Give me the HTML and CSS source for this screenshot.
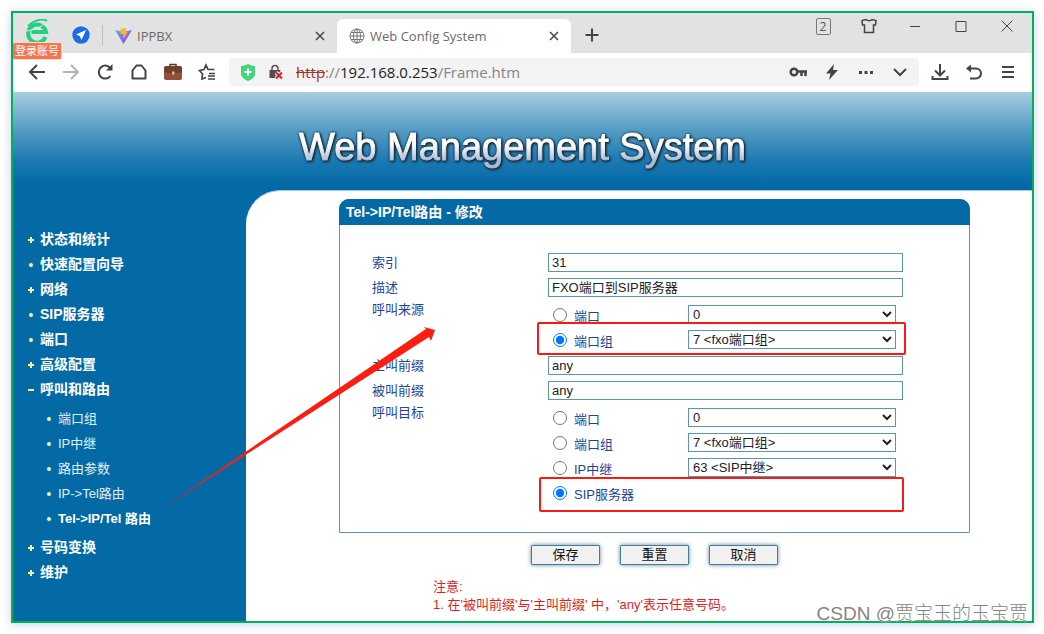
FILE: index.html
```html
<!DOCTYPE html>
<html lang="zh-CN">
<head>
<meta charset="utf-8">
<meta name="viewport" content="width=device-width, initial-scale=1">
<title>Web Config System</title>
<link rel="stylesheet" href="styles.css">
</head>
<body>
<div class="window">
  <header class="tabstrip">
    <div class="brand">
      <svg width="24" height="24" viewBox="0 0 24 24" fill="none" aria-hidden="true">
        <path d="M20.500 18A9 9 0 1 1 21 13H6.500" stroke="#22cf83" stroke-width="4"/>
        <path d="M3 7C9 1 18-1 22 2" stroke="#22cf83" stroke-width="2"/>
        <path d="M1 12C9 11 17 8 21 3" stroke="#e2e2e2" stroke-width="1"/>
      </svg>
      <span class="login">登录账号</span>
    </div>
    <svg class="plane" width="18" height="18" viewBox="0 0 18 18" aria-hidden="true"><circle cx="9" cy="9" r="8.700" fill="#1a6fe0"/><path d="M14 4 4 8.500l3.700 1.400L9.500 14z" fill="#fff"/></svg>
    <span class="divider"></span>
    <div class="tab">
      <svg width="17" height="16" viewBox="0 0 17 16" aria-hidden="true">
        <defs><linearGradient id="vite" x1="0" y1="0" x2="1" y2="1"><stop offset="0" stop-color="#45b8f5"/><stop offset="1" stop-color="#b52de0"/></linearGradient></defs>
        <path d="M0 2 8.500 16 17 2 8.500 4z" fill="url(#vite)"/><path d="M5.500 1 11.500 0l-1 4h2L8.500 11 8 6H5.500z" fill="#f8b91f"/>
      </svg>
      <span class="tab-name">IPPBX</span>
      <button class="close" aria-label="关闭 IPPBX"><svg width="10" height="10" viewBox="0 0 10 10"><path d="M1 1l8 8M9 1 1 9"/></svg></button>
    </div>
    <div class="tab active">
      <svg width="16" height="16" viewBox="0 0 16 16" fill="none" stroke="#777" aria-hidden="true"><circle cx="8" cy="8" r="7"/><ellipse cx="8" cy="8" rx="3.500" ry="7"/><path d="M8 1v14M1 8h14M2 4.500h12M2 11.500h12"/></svg>
      <span class="tab-name">Web Config System</span>
      <button class="close" aria-label="关闭 Web Config System"><svg width="10" height="10" viewBox="0 0 10 10"><path d="M1 1l8 8M9 1 1 9"/></svg></button>
    </div>
    <button class="newtab" aria-label="新标签页"><svg width="14" height="14" viewBox="0 0 14 14"><path d="M7 .5v13M.5 7h13"/></svg></button>
    <div class="controls">
      <button aria-label="窗口数"><span class="count">2</span></button>
      <button aria-label="皮肤"><svg width="16" height="16" viewBox="0 0 16 16"><path d="M5 1.500C6.500 3 9.500 3 11 1.500l4 1-.5 4.500h-2v7.500h-9V7h-2L1 2.500z" stroke-width="1.500"/></svg></button>
      <button aria-label="最小化"><svg width="12" height="12" viewBox="0 0 12 12"><path d="M1 6.500h10"/></svg></button>
      <button aria-label="最大化"><svg width="12" height="12" viewBox="0 0 12 12"><path d="M1 1.500h10v10H1z"/></svg></button>
      <button aria-label="关闭"><svg width="12" height="12" viewBox="0 0 12 12"><path d="m.5.5 11 11M11.500.5l-11 11"/></svg></button>
    </div>
  </header>

  <nav class="toolbar" aria-label="浏览器工具栏">
    <button aria-label="后退"><svg width="18" height="18" viewBox="0 0 18 18"><path d="M17 9H2.500M9 2 2 9l7 7"/></svg></button>
    <button class="dim" aria-label="前进"><svg width="18" height="18" viewBox="0 0 18 18"><path d="M1 9h14.500M9 2l7 7-7 7"/></svg></button>
    <button aria-label="刷新"><svg width="18" height="18" viewBox="0 0 18 18"><path d="M14.500 13A6.500 6.500 0 1 1 15 6"/><path d="M16.500 1v6.500H10z" fill="#444" stroke="none"/></svg></button>
    <button aria-label="主页"><svg width="18" height="18" viewBox="0 0 18 18"><path d="M2.500 15.500V7.500L6.500 2.500h5l4 5v8z" stroke-linejoin="round"/></svg></button>
    <button aria-label="工具箱"><svg width="20" height="18" viewBox="0 0 20 18"><path d="M7 4V1.500h6V4" stroke="#5d3323" stroke-width="1.500"/><rect x="1" y="3.500" width="18" height="13.500" rx="2" fill="#8f5138" stroke="none"/><path d="M1 5q0-2 2-2h14q2 0 2 2v4l-9 2-9-2z" fill="#70402d" stroke="none"/><path d="M9 8.500h2.500v3H9z" fill="#e7b48d" stroke="none"/></svg></button>
    <button aria-label="收藏"><svg width="18" height="18" viewBox="0 0 18 18"><path d="M8 14.500 4 16l.5-5L1.500 7.500l4.500-1L8 2l2 4.500h6.500M11 10.500h6M10 13h7M10 16h7" stroke-width="1.700"/></svg></button>
    <div class="address">
      <svg width="16" height="17" viewBox="0 0 16 17" aria-hidden="true"><path d="M1 2q4 0 7-2 3 2 7 2v8q0 4-7 7-7-3-7-7z" fill="#43d579"/><path d="M8 4.500v7M4.500 8h7" stroke="#fff" stroke-width="2"/></svg>
      <svg width="16" height="16" viewBox="0 0 16 16" fill="none" aria-hidden="true"><path d="M4 7V4.500a3 3 0 0 1 6 0V7" stroke="#555" stroke-width="1.500"/><path d="M1.500 6h11v8h-11z" fill="#505050"/><path d="m8 8.500 6 6M14 8.500l-6 6" stroke="#f3f3f3" stroke-width="4"/><path d="m8 8.500 6 6M14 8.500l-6 6" stroke="#d0222c" stroke-width="2"/></svg>
      <span class="url"><s>http</s>://<b>192.168.0.253</b>/Frame.htm</span>
      <span class="address-tools">
        <button aria-label="密码"><svg width="18" height="12" viewBox="0 0 18 12"><circle cx="5" cy="6" r="3.300" stroke-width="2.500"/><path d="M8 5.500h10M12.500 5.500V10M16.500 5.500V10" stroke-width="2.500"/></svg></button>
        <button aria-label="加速"><svg width="14" height="16" viewBox="0 0 14 16"><path d="M9 0 1 9.500h4.500L4 16l9-10H8z" fill="#444" stroke="none"/></svg></button>
        <button aria-label="更多"><svg width="16" height="4" viewBox="0 0 16 4"><path d="M1 1h3v3H1zM6.500 1h3v3h-3zM12 1h3v3h-3z" fill="#444" stroke="none"/></svg></button>
        <button aria-label="展开"><svg width="14" height="9" viewBox="0 0 14 9"><path d="m1 1 6 6 6-6"/></svg></button>
      </span>
    </div>
    <button aria-label="下载"><svg width="18" height="18" viewBox="0 0 18 18"><path d="M9 1v11M4 7.500l5 5 5-5M1.500 13v3h15v-3"/></svg></button>
    <button aria-label="恢复"><svg width="18" height="18" viewBox="0 0 18 18"><path d="M3 5.500h8a5 5 0 0 1 0 10H5"/><path d="M1 5.500 6 1.500v8z" fill="#444" stroke="none"/></svg></button>
    <button aria-label="菜单"><svg width="14" height="14" viewBox="0 0 14 14"><path d="M1 2h12M1 7h12M1 12h12"/></svg></button>
  </nav>

  <div class="banner"><h1>Web Management System</h1></div>

  <div class="frame">
    <nav class="sidebar" aria-label="主菜单">
      <ul class="menu">
        <li><a class="plus" href="#">状态和统计</a></li>
        <li><a class="dot" href="#">快速配置向导</a></li>
        <li><a class="plus" href="#">网络</a></li>
        <li><a class="dot" href="#">SIP服务器</a></li>
        <li><a class="dot" href="#">端口</a></li>
        <li><a class="plus" href="#">高级配置</a></li>
        <li><a class="minus" href="#">呼叫和路由</a>
          <ul class="submenu">
            <li><a class="dot" href="#">端口组</a></li>
            <li><a class="dot" href="#">IP中继</a></li>
            <li><a class="dot" href="#">路由参数</a></li>
            <li><a class="dot" href="#">IP-&gt;Tel路由</a></li>
            <li><a class="dot current" href="#">Tel-&gt;IP/Tel 路由</a></li>
          </ul>
        </li>
        <li><a class="plus" href="#">号码变换</a></li>
        <li><a class="plus" href="#">维护</a></li>
      </ul>
    </nav>

    <main class="content">
      <form>
        <section class="panel">
          <h2>Tel-&gt;IP/Tel路由 - 修改</h2>
          <div class="fields">
            <div class="row"><label for="index">索引</label><input id="index" type="text" value="31"></div>
            <div class="row"><label for="desc">描述</label><input id="desc" type="text" value="FXO端口到SIP服务器"></div>
            <div class="row group" role="radiogroup" aria-labelledby="source">
              <span class="group-name" id="source">呼叫来源</span>
              <div class="options">
                <div class="option"><input type="radio" name="source" id="s1"><label for="s1">端口</label><select aria-label="来源端口"><option>0</option></select></div>
                <div class="option marked"><input type="radio" name="source" id="s2" checked><label for="s2">端口组</label><select aria-label="来源端口组"><option>7 &lt;fxo端口组&gt;</option></select></div>
              </div>
            </div>
            <div class="row"><label for="caller">主叫前缀</label><input id="caller" type="text" value="any"></div>
            <div class="row"><label for="callee">被叫前缀</label><input id="callee" type="text" value="any"></div>
            <div class="row group" role="radiogroup" aria-labelledby="target">
              <span class="group-name" id="target">呼叫目标</span>
              <div class="options">
                <div class="option"><input type="radio" name="target" id="t1"><label for="t1">端口</label><select aria-label="目标端口"><option>0</option></select></div>
                <div class="option"><input type="radio" name="target" id="t2"><label for="t2">端口组</label><select aria-label="目标端口组"><option>7 &lt;fxo端口组&gt;</option></select></div>
                <div class="option"><input type="radio" name="target" id="t3"><label for="t3">IP中继</label><select aria-label="目标IP中继"><option>63 &lt;SIP中继&gt;</option></select></div>
                <div class="option marked last"><input type="radio" name="target" id="t4" checked><label for="t4">SIP服务器</label></div>
              </div>
            </div>
          </div>
        </section>
        <div class="actions">
          <button type="button">保存</button>
          <button type="button">重置</button>
          <button type="button">取消</button>
        </div>
      </form>
      <div class="note">
        <p>注意:</p>
        <p>1. 在'被叫前缀'与'主叫前缀' 中，'any'表示任意号码。</p>
      </div>
    </main>
  </div>

  <svg class="arrow" width="280" height="190" viewBox="0 0 280 190" aria-hidden="true"><path d="M0 185 266 4l-2-2 11 3-4 11-2-4z" fill="#fc1c10"/></svg>
  <span class="watermark">CSDN @贾宝玉的玉宝贾</span>
</div>
</body>
</html>
```
FILE: styles.css
```css
*, *::before, *::after { box-sizing: border-box; }

body {
  margin: 0;
  padding: 11px 10px;
  background: #fff;
  font: 13px/19px "Liberation Sans", "Noto Sans CJK SC", sans-serif;
}

h1, h2, p, ul { margin: 0; padding: 0; }
ul { list-style: none; }
svg { display: block; flex: none; }
button, input, select { font: inherit; }

.window {
  position: relative;
  display: flex;
  flex-direction: column;
  min-height: calc(100vh - 22px);
  margin-left: 1px;
  border: 2px solid #00b15a;
  box-shadow: 0 1px 9px rgba(70, 100, 190, .3);
  background: #fff;
}

/* Browser tabs */
.tabstrip {
  display: flex;
  align-items: center;
  height: 40px;
  padding-left: 12px;
  background: #e2e2e2;
  font-family: "Open Sans", "Noto Sans CJK SC", sans-serif;
  color: #6a6a6a;
}
.tabstrip button, .toolbar button {
  display: flex;
  align-items: center;
  justify-content: center;
  padding: 0;
  border: 0;
  background: none;
}
.tabstrip button svg, .toolbar button svg { fill: none; stroke: #444; }
.brand { position: relative; width: 24px; height: 28px; }
.login {
  position: absolute;
  top: 23px;
  left: -12px;
  z-index: 2;
  padding: 0 2px;
  border: 1px solid #f9ddd0;
  border-left: 0;
  border-radius: 2px;
  background: #f4764e;
  color: #fff;
  font-size: 11px;
  line-height: 16px;
  white-space: nowrap;
}
.plane { margin-left: 23px; margin-top: 4px; }
.divider { width: 1px; height: 20px; margin-left: 12px; margin-top: 4px; background: #bdbdbd; }
.tab {
  display: flex;
  align-items: center;
  align-self: flex-end;
  width: 234px;
  height: 34px;
  padding: 0 12px;
  gap: 5px;
}
.active { border-radius: 6px 6px 0 0; background: #fff; }
.tab-name { flex: 1; white-space: nowrap; }
.close { width: 10px; height: 20px; }
.close svg { stroke-width: 1.5; }
.newtab { width: 42px; height: 34px; margin-top: 4px; }
.newtab svg { stroke-width: 2; }
.controls {
  display: flex;
  align-self: flex-start;
  margin-left: auto;
  padding-right: 2px;
}
.controls button { width: 46px; height: 26px; }
.count {
  width: 15px;
  border: 1px solid #777;
  border-radius: 2px;
  color: #555;
  font-size: 12px;
  line-height: 15px;
}

/* Browser toolbar */
.toolbar {
  display: flex;
  align-items: center;
  height: 39px;
  padding: 0 7px 1px;
}
.toolbar button { flex: none; width: 34px; height: 28px; }
.toolbar button svg { stroke-width: 2; }
.toolbar .dim { opacity: .4; }
.address {
  display: flex;
  flex: 1;
  align-items: center;
  gap: 12px;
  height: 28px;
  margin: 0 4px 0 5px;
  padding-left: 11px;
  border-radius: 4px;
  background: #f3f3f3;
}
.url {
  color: #858585;
  font: 15px/20px "Open Sans", sans-serif;
  white-space: nowrap;
}
.url b { color: #222; font-weight: 400; }
.url s { color: #9d342e; }
.address-tools { display: flex; margin-left: auto; padding-right: 2px; }

/* Page banner */
.banner {
  display: flex;
  align-items: center;
  justify-content: center;
  height: 98px;
  padding-top: 12px;
  background: linear-gradient(#a8cde0, #5a9fc6 36%, #1c79b2 70%, #036aa6 94%);
}
.banner h1 {
  padding: 0 2px;
  background: linear-gradient(#fff 45%, #a9bcd6 80%);
  background-clip: text;
  -webkit-background-clip: text;
  -webkit-text-stroke: 1px transparent;
  color: transparent;
  filter: drop-shadow(0 0 1px #0c2233) drop-shadow(1px 1px 1px #12242e);
  font-size: 38px;
  font-weight: 400;
  line-height: 46px;
}

.frame { display: flex; flex: 1; background: #036aa6; }

/* Menu */
.sidebar { width: 233px; padding: 37px 0 0 15px; }
.menu a {
  display: flex;
  align-items: center;
  gap: 6px;
  height: 25px;
  color: #fff;
  font-size: 14px;
  font-weight: 700;
  text-decoration: none;
}
.menu a::before {
  content: "";
  width: 6px;
  height: 6px;
  background:
    linear-gradient(#f4f79a, #f4f79a) center / 6px 2px no-repeat,
    linear-gradient(#f4f79a, #f4f79a) center / 2px 6px no-repeat;
}
.menu .dot::before { border: 1px solid #036aa6; border-radius: 3px; background: #f4f79a; }
.menu .minus::before { background: linear-gradient(#f4f79a, #f4f79a) center / 6px 2px no-repeat; }
.submenu { padding: 4px 0 4px 18px; }
.menu .submenu a { color: #e3eff7; font-size: 13px; font-weight: 400; }
.menu .submenu .current { color: #fff; font-weight: 700; }

/* Route form */
.content {
  flex: 1;
  padding: 8px 62px 7px 93px;
  border-top: 1px solid #9cc8de;
  border-top-left-radius: 34px;
  background: #fff;
}
.panel { border: 1px solid #5c95b2; border-radius: 10px 10px 0 0; }
.panel h2 {
  margin: -1px -1px 0;
  padding: 0 7px;
  border-radius: 10px 10px 0 0;
  background: #036aa6;
  color: #fff;
  font-size: 14px;
  line-height: 26px;
}
.fields { padding: 25px 66px 26px 32px; color: #1d4693; }
.row {
  display: grid;
  grid-template-columns: 176px 1fr;
  align-items: center;
  min-height: 25px;
}
.group { align-items: start; }
.options { padding: 2px 0 1px; }
.row input[type="text"], .option select {
  width: 100%;
  height: 19px;
  padding: 0 3px;
  border: 1px solid #5c95b2;
  border-radius: 0;
  background: #fff;
  color: #222;
}
.option {
  position: relative;
  display: grid;
  grid-template-columns: 14px 107px 1fr;
  column-gap: 7px;
  align-items: center;
  height: 25px;
  padding: 0 7px 0 5px;
}
.option input { width: 14px; height: 14px; margin: 0; }
.option label { padding-top: 4px; }
.option select { padding: 0; }
.marked::after {
  content: "";
  position: absolute;
  inset: -5px -3px -3px -11px;
  z-index: 1;
  border: 2px solid #fb1a12;
  border-radius: 2px;
  pointer-events: none;
}
.last::after { inset: -3px -1px -7px -9px; }

.actions { display: flex; justify-content: center; gap: 20px; padding-top: 12px; }
.actions button {
  width: 69px;
  height: 20px;
  padding: 0;
  border: 1px solid #3d7f9f;
  border-radius: 1px;
  box-shadow: 0 0 4px rgba(40, 80, 100, .7);
  background: #f1f1f1;
  color: #111;
  line-height: 18px;
}
.note { padding: 13px 0 0 94px; color: #db1f1f; line-height: 18px; }

/* Annotations over the page */
.arrow { position: absolute; top: 312px; left: 147px; pointer-events: none; }
.watermark {
  position: absolute;
  right: 4px;
  bottom: -5px;
  color: #858585;
  font: 300 19px/24px "Liberation Sans", "Noto Sans CJK SC", sans-serif;
  text-shadow: 0 0 1px #fff;
}
```
